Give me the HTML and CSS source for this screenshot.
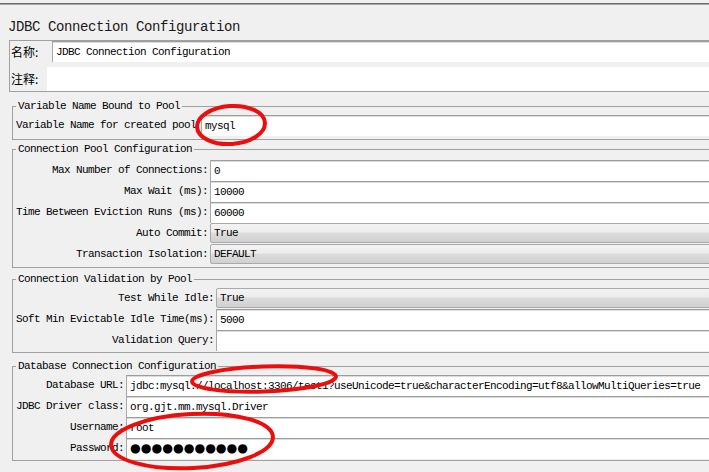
FILE: index.html
```html
<!DOCTYPE html>
<html>
<head>
<meta charset="utf-8">
<link rel="stylesheet" href="styles.css">
</head>
<body>
<div class="page">
  <div class="topline"></div>
  <h1 class="title">JDBC Connection Configuration</h1>

  <div class="namebox">
    <div class="nrow">
      <span class="nlbl n1">名称:</span>
      <div class="field">JDBC Connection Configuration</div>
    </div>
    <div class="nrow crow">
      <span class="nlbl n2">注释:</span>
      <div class="area"></div>
    </div>
  </div>

  <fieldset class="grp g1">
    <legend>Variable Name Bound to Pool</legend>
    <div class="rows wide">
      <span class="lbl left">Variable Name for created pool</span>
      <div class="field">mysql</div>
    </div>
  </fieldset>

  <fieldset class="grp g2">
    <legend>Connection Pool Configuration</legend>
    <div class="rows">
      <span class="lbl">Max Number of Connections:</span>
      <div class="field">0</div>
      <span class="lbl">Max Wait (ms):</span>
      <div class="field">10000</div>
      <span class="lbl">Time Between Eviction Runs (ms):</span>
      <div class="field">60000</div>
      <span class="lbl">Auto Commit:</span>
      <div class="combo">True</div>
      <span class="lbl">Transaction Isolation:</span>
      <div class="combo">DEFAULT</div>
    </div>
  </fieldset>

  <fieldset class="grp g3">
    <legend>Connection Validation by Pool</legend>
    <div class="rows">
      <span class="lbl">Test While Idle:</span>
      <div class="combo">True</div>
      <span class="lbl">Soft Min Evictable Idle Time(ms):</span>
      <div class="field">5000</div>
      <span class="lbl">Validation Query:</span>
      <div class="field"></div>
    </div>
  </fieldset>

  <fieldset class="grp g4">
    <legend>Database Connection Configuration</legend>
    <div class="rows">
      <span class="lbl">Database URL:</span>
      <div class="field">jdbc:mysql://localhost:3306/test1?useUnicode=true&amp;characterEncoding=utf8&amp;allowMultiQueries=true</div>
      <span class="lbl">JDBC Driver class:</span>
      <div class="field">org.gjt.mm.mysql.Driver</div>
      <span class="lbl">Username:</span>
      <div class="field">root</div>
      <span class="lbl">Password:</span>
      <div class="field pwd">●●●●●●●●●●●</div>
    </div>
  </fieldset>
</div>

<svg class="marks" width="709" height="472" viewBox="0 0 709 472">
  <ellipse cx="231" cy="125" rx="34" ry="19" transform="rotate(-4 231 125)"/>
  <ellipse cx="264" cy="379" rx="72" ry="12.5" transform="rotate(-2 264 379)"/>
  <ellipse cx="192" cy="441" rx="81" ry="27" transform="rotate(-3 192 441)"/>
</svg>
</body>
</html>
```

FILE: styles.css
```css
html, body {
  margin: 0;
  padding: 0;
  background: #f0f0f0;
  overflow: hidden;
}

body {
  width: 709px;
  height: 472px;
  position: relative;
  font-family: "Liberation Mono", "DejaVu Sans Mono", monospace;
  font-size: 11px;
  letter-spacing: -0.6px;
  color: #000;
}

.page {
  width: 780px;
  padding-top: 3px;
}

.topline {
  height: 1px;
  background: #6a6a6a;
  border-bottom: 1px solid #a8a8a8;
}

.title {
  margin: 14px 0 5px 8px;
  font-family: "Liberation Mono", "DejaVu Sans Mono", monospace;
  font-size: 14px;
  letter-spacing: -0.4px;
  line-height: 16px;
  font-weight: normal;
  color: #1a1a1a;
}

.namebox {
  margin-left: 9px;
  border: 1px solid #a0a0a0;
}

.nrow {
  display: flex;
  height: 21px;
  margin-bottom: 5px;
}

.nrow.crow {
  height: 24px;
  margin-bottom: 0;
}

.nlbl {
  font-family: "Noto Sans CJK SC", sans-serif;
  font-size: 12px;
  letter-spacing: 0;
  line-height: 21px;
  padding-left: 1px;
  flex: none;
}

.n1 { width: 41px; }
.n2 { width: 36px; line-height: 24px; }

.nrow .field { flex: 1; }

.area {
  flex: 1;
  background: #fff;
}

.grp {
  margin: 0 0 0 12px;
  padding: 3px 0 2px 3px;
  border: 1px solid #a0a0a0;
  min-width: 0;
}

.grp legend {
  padding: 0 2px;
  line-height: 12px;
  height: 12px;
}

.g1 { margin-top: 8px; padding-bottom: 3px; }
.g2 { margin-top: 3px; padding-top: 5px; padding-bottom: 2px; }
.g3 { margin-top: 5px; padding-top: 3px; padding-bottom: 1px; }
.g4 { margin-top: 7px; padding-top: 3px; padding-bottom: 1px; }

.rows {
  display: grid;
  grid-template-columns: auto 1fr;
  column-gap: 2px;
  align-items: center;
}

.rows.wide { column-gap: 5px; }

.lbl {
  text-align: right;
  white-space: nowrap;
  line-height: 21px;
}

.lbl.left { text-align: left; }

.field {
  height: 21px;
  box-sizing: border-box;
  background: #fff;
  border-top: 1px solid #9d9d9d;
  border-left: 1px solid #a8a8a8;
  box-shadow: inset 0 1px 0 #dcdcdc;
  padding-left: 3px;
  line-height: 20px;
  white-space: nowrap;
  overflow: hidden;
}

.combo {
  height: 20px;
  margin: 0 0 1px 0;
  box-sizing: border-box;
  border: 1px solid #a9a9a9;
  border-radius: 2px;
  background: linear-gradient(to bottom, #f3f3f3 0%, #ececec 45%, #dcdcdc 50%, #d0d0d0 100%);
  padding-left: 3px;
  line-height: 18px;
  white-space: nowrap;
}

.pwd {
  font-family: "DejaVu Sans", sans-serif;
  font-size: 12.3px;
  letter-spacing: 0;
  line-height: 19px;
}

.marks {
  position: absolute;
  left: 0;
  top: 0;
  pointer-events: none;
}

.marks ellipse {
  fill: none;
  stroke: #ec0d0d;
  stroke-width: 4;
}
```
